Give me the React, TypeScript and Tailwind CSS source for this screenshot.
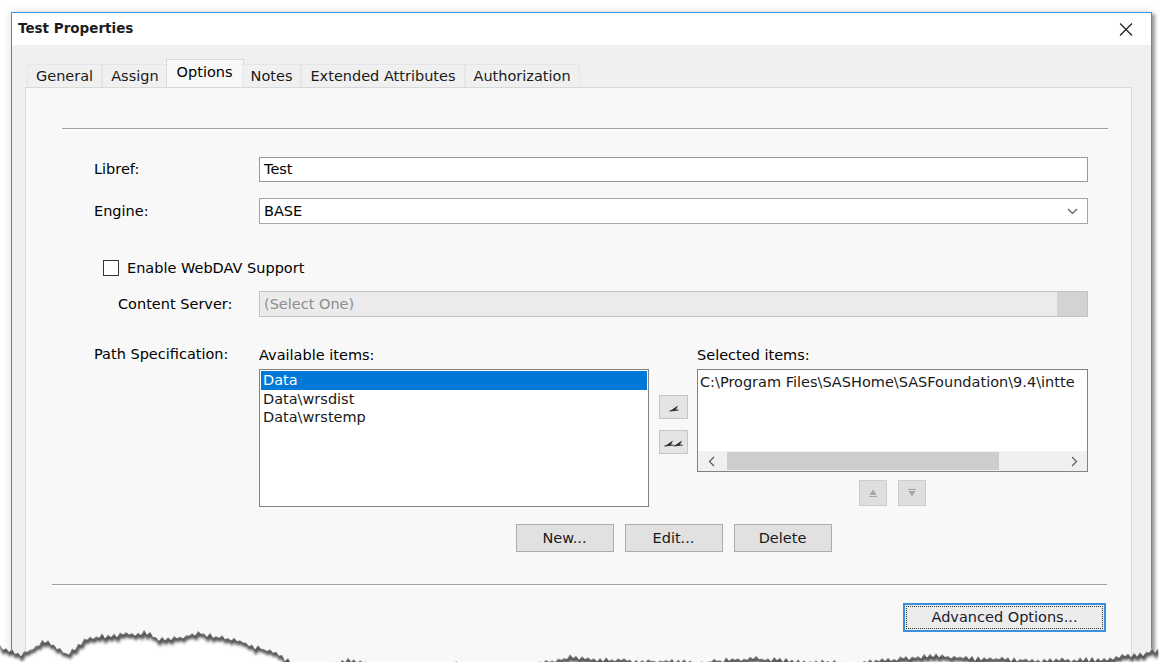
import React from "react";

const tabs = ["General", "Assign", "Options", "Notes", "Extended Attributes", "Authorization"];

// rough outline of the torn bottom edge, in page coordinates
const ridge: [number, number][] = [
  [0, 647], [22, 655], [44, 640], [67, 655], [89, 637], [150, 632], [159, 640], [200, 633],
  [237, 640], [259, 648], [274, 652], [296, 665], [311, 670], [348, 660], [400, 668], [455, 663],
  [520, 667], [570, 657], [620, 660], [700, 662], [754, 658], [802, 662], [860, 663], [928, 655],
  [987, 659], [1050, 660], [1098, 659], [1135, 655], [1160, 649],
];

function edgeAt(x: number) {
  for (let i = 1; i < ridge.length; i++) {
    const [x1, y1] = ridge[i];
    const [x0, y0] = ridge[i - 1];
    if (x <= x1) return y0 + ((y1 - y0) * (x - x0)) / (x1 - x0);
  }
  return ridge[ridge.length - 1][1];
}

const EDGE_TOP = 600;
const edgePts: string[] = [];
for (let x = 0; x <= 1160; x += 3) {
  const n = Math.sin(x * 12.9898) * 43758.5453;
  const r = n - Math.floor(n);
  const tooth = (x / 3) % 2 === 0 ? -1.6 : 1.6;
  edgePts.push(`${x},${(edgeAt(x) - EDGE_TOP + tooth + (r * 3 - 1.5)).toFixed(1)}`);
}
const edgeLine = "M" + edgePts.join(" L");
const paperBelow = `${edgeLine} L1160,70 L0,70 Z`;

function TornEdge() {
  return (
    <svg className="pointer-events-none absolute left-0 top-[600px]" width="1160" height="62" viewBox="0 0 1160 62">
      <defs>
        <clipPath id="below">
          <path d={paperBelow} />
        </clipPath>
        <filter id="soft" x="-5%" y="-50%" width="110%" height="200%">
          <feGaussianBlur stdDeviation="1.4" />
        </filter>
      </defs>
      <path d={paperBelow} fill="#ffffff" />
      <g clipPath="url(#below)">
        <path d={edgeLine} transform="translate(1 2)" fill="none" stroke="#4d4d4d" strokeWidth="4" filter="url(#soft)" />
      </g>
    </svg>
  );
}

function Chevron({ className = "" }: { className?: string }) {
  return (
    <svg width="11" height="7" viewBox="0 0 11 7" className={className}>
      <path d="M1 1 L5.5 5.5 L10 1" fill="none" stroke="#5a5a5a" strokeWidth="1.2" />
    </svg>
  );
}

// small slanted pointer used on the add / add-all buttons
function SailArrow() {
  return (
    <svg width="10" height="9" viewBox="0 0 10 9">
      <path d="M1 8 L9 2.5 L7 6.8 Z" fill="#2a2a2a" />
      <path d="M0.5 8 L9.5 7" stroke="#2a2a2a" strokeWidth="1.1" />
    </svg>
  );
}

function MoveButton({ double }: { double?: boolean }) {
  return (
    <div className="flex h-[24px] w-[29px] items-center justify-center border border-[#c6c6c6] bg-[#e4e4e4]">
      <SailArrow />
      {double && (
        <span className="-ml-[1px]">
          <SailArrow />
        </span>
      )}
    </div>
  );
}

function OrderButton({ up }: { up?: boolean }) {
  return (
    <div className="flex h-[26px] w-[28px] items-center justify-center border border-[#cdcdcd] bg-[#dedede]">
      <svg width="10" height="10" viewBox="0 0 10 10">
        {up ? (
          <>
            <path d="M5 1.5 L8.5 7 L1.5 7 Z" fill="#a5a5a5" />
            <path d="M1 8.5 H9" stroke="#a5a5a5" strokeWidth="1" />
          </>
        ) : (
          <>
            <path d="M1 1.5 H9" stroke="#a5a5a5" strokeWidth="1" />
            <path d="M1.5 3 L8.5 3 L5 8.5 Z" fill="#a5a5a5" />
          </>
        )}
      </svg>
    </div>
  );
}

function PushButton({ label }: { label: string }) {
  return (
    <div className="flex h-[28px] w-[98px] shrink-0 items-center justify-center border border-[#adadad] bg-[#e1e1e1] text-[#1a1a1a]">
      {label}
    </div>
  );
}

function Etched({ className = "" }: { className?: string }) {
  return <div className={`h-[2px] border-t border-b border-t-[#a0a0a0] border-b-white ${className}`} />;
}

export default function App() {
  return (
    <div className="relative h-[662px] w-[1160px] overflow-hidden bg-white pl-[11px] pt-[12px] font-['DejaVu_Sans',sans-serif] text-[14.5px] leading-none text-black">
      {/* dialog window */}
      <div className="h-[720px] w-[1141px] border border-[#3b8fe0] bg-[#f0f0f0] shadow-[0_0_9px_rgba(0,0,0,0.14),3px_2px_3px_rgba(0,0,0,0.35)]">
        {/* title bar */}
        <div className="flex h-[32px] items-center justify-between bg-white pl-[6px] pr-[18px]">
          <span className="text-[13.5px] font-bold text-[#1c1c1c]">Test Properties</span>
          <svg width="14" height="13" viewBox="0 0 14 13">
            <path d="M1 0.5 L13 12.5 M13 0.5 L1 12.5" stroke="#222" strokeWidth="1.3" />
          </svg>
        </div>

        <div className="pl-[13px] pr-[19px] pt-[15px]">
          {/* tab strip */}
          <div className="relative z-10 flex h-[27px] items-end pl-[2px]">
            {tabs.map((t) =>
              t === "Options" ? (
                <div
                  key={t}
                  className="-mx-[2px] flex h-[28px] items-center border border-b-0 border-[#d9d9d9] bg-[#f8f8f8] px-[10px] pb-[3px]"
                >
                  {t}
                </div>
              ) : (
                <div
                  key={t}
                  className="flex h-[23px] items-center border border-b-0 border-[#e6e6e6] bg-[#f0f0f0] px-[8px] text-[#1a1a1a]"
                >
                  {t}
                </div>
              )
            )}
          </div>

          {/* tab page */}
          <div className="h-[620px] border border-[#d9d9d9] bg-[#f8f8f8]">
            <Etched className="ml-[36px] mr-[23px] mt-[40px]" />

            <div className="ml-[68px] grid grid-cols-[165px_829px] items-center">
              <span className="mt-[27px]">Libref:</span>
              <div className="mt-[27px] flex h-[25px] items-center border border-[#9a9a9a] bg-white pl-[4px]">Test</div>

              <span className="mt-[16px]">Engine:</span>
              <div className="mt-[16px] flex h-[26px] items-center justify-between border border-[#a6a6a6] bg-white pl-[4px] pr-[9px]">
                <span>BASE</span>
                <Chevron />
              </div>

              <label className="col-span-2 mt-[36px] flex items-center gap-[8px] pl-[9px]">
                <span className="h-[16px] w-[16px] border border-[#333] bg-white" />
                <span>Enable WebDAV Support</span>
              </label>

              <span className="mt-[15px] pl-[24px]">Content Server:</span>
              <div className="mt-[15px] flex h-[26px] items-stretch border border-[#c2c2c2] bg-[#ebebeb]">
                <span className="flex flex-1 items-center pl-[4px] text-[#8e8e8e]">(Select One)</span>
                <span className="w-[30px] bg-[#d3d3d3]" />
              </div>

              <span className="mt-[30px] self-start">Path Specification:</span>
              <div className="mt-[30px] flex">
                {/* available items */}
                <div className="flex w-[390px] flex-col">
                  <span className="h-[16px] leading-[16px]">Available items:</span>
                  <div className="mt-[6px] h-[138px] border border-[#828282] bg-white pt-[1px] text-[#1a1a1a]">
                    <div className="mx-[1px] h-[19px] bg-[#0078d7] pl-[2px] leading-[19px] text-white">Data</div>
                    <div className="h-[18px] pl-[3px] leading-[18px]">Data\wrsdist</div>
                    <div className="h-[18px] pl-[3px] leading-[18px]">Data\wrstemp</div>
                  </div>
                </div>

                {/* move buttons */}
                <div className="ml-[10px] mt-[48px] flex flex-col gap-[11px]">
                  <MoveButton />
                  <MoveButton double />
                </div>

                {/* selected items */}
                <div className="ml-[9px] flex w-[391px] flex-col">
                  <span className="h-[16px] leading-[16px]">Selected items:</span>
                  <div className="mt-[6px] flex h-[103px] flex-col border border-[#828282] bg-white">
                    <div className="flex-1 overflow-hidden whitespace-nowrap pl-[2px] pt-[5px] text-[#1a1a1a]">
                      C:\Program Files\SASHome\SASFoundation\9.4\intte
                    </div>
                    <div className="flex h-[20px] items-center bg-[#f0f0f0]">
                      <span className="flex w-[26px] justify-center">
                        <Chevron className="rotate-90" />
                      </span>
                      <span className="ml-[3px] h-[18px] w-[272px] bg-[#cdcdcd]" />
                      <span className="ml-auto flex w-[26px] justify-center">
                        <Chevron className="-rotate-90" />
                      </span>
                    </div>
                  </div>
                  <div className="mt-[8px] flex justify-center gap-[11px]">
                    <OrderButton up />
                    <OrderButton />
                  </div>
                </div>
              </div>

              <div className="col-start-2 mt-[17px] flex justify-center gap-[11px]">
                <PushButton label="New..." />
                <PushButton label="Edit..." />
                <PushButton label="Delete" />
              </div>
            </div>

            <Etched className="ml-[26px] mr-[24px] mt-[32px]" />

            <div className="mr-[25px] mt-[17px] flex justify-end">
              <div className="flex h-[29px] w-[203px] items-center justify-center border-2 border-[#3c8fdc] bg-[#ececec] p-[1px]">
                <div className="flex h-full w-full items-center justify-center border border-dotted border-[#333] text-[#1a1a2e]">
                  Advanced Options...
                </div>
              </div>
            </div>
          </div>
        </div>
      </div>

      <TornEdge />
    </div>
  );
}
